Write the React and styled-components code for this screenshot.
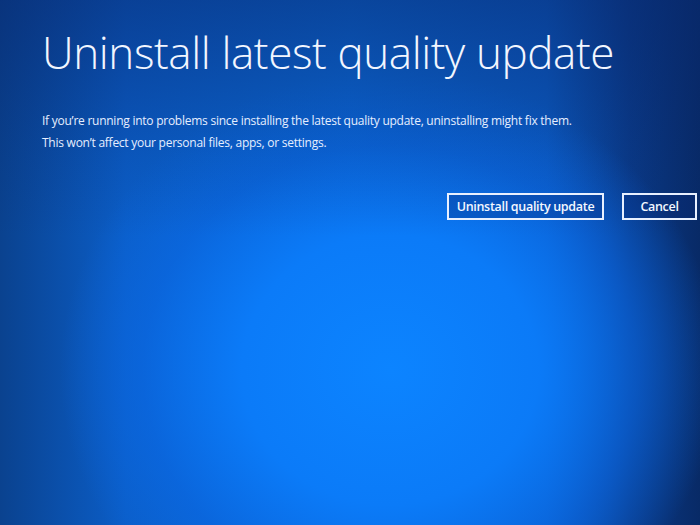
import styled, { createGlobalStyle } from "styled-components"

const GlobalStyle = createGlobalStyle`
  html, body {
    margin: 0;
    padding: 0;
    width: 700px;
    height: 525px;
    overflow: hidden;
  }
  body {
    font-family: "Open Sans", "Noto Sans", sans-serif;
  }
`

const Screen = styled.div`
  width: 700px;
  height: 525px;
  box-sizing: border-box;
  padding: 22px 0 0 42px;
  color: #fff;
  background:
    linear-gradient(to bottom, rgba(8, 40, 110, 0.55) 0%, rgba(8, 40, 110, 0.15) 30%, rgba(8, 40, 110, 0) 45%),
    radial-gradient(
      ellipse 330px 300px at 390px 370px,
      rgba(12, 132, 255, 1) 0%,
      rgba(11, 124, 250, 0.95) 45%,
      rgba(10, 105, 230, 0.6) 75%,
      rgba(10, 90, 210, 0) 100%
    ),
    linear-gradient(to right, #0a428f 0%, #0b5ec8 18%, #0b6ad8 50%, #0b5cc4 78%, #0a3a88 90%, #082a66 100%);
`

const Title = styled.h1`
  margin: 0;
  font-size: 44px;
  font-weight: 300;
  line-height: 60px;
  letter-spacing: -0.4px;
  color: #f2f6ff;
`

const Message = styled.p`
  margin: ${(p) => (p.first ? "31px" : "6px")} 0 0;
  font-size: 12px;
  line-height: 16px;
  letter-spacing: -0.25px;
  color: #e6eeff;
`

const Actions = styled.div`
  display: flex;
  justify-content: flex-end;
  gap: 18px;
  margin-top: 42px;
  padding-right: 3px;
`

const Button = styled.button`
  box-sizing: border-box;
  height: 27px;
  width: ${(p) => (p.wide ? "157px" : "75px")};
  padding: 0;
  background: rgba(8, 40, 120, 0.3);
  border: 2px solid #e8f0ff;
  color: #f4f8ff;
  font-family: "Open Sans", "Noto Sans", sans-serif;
  font-size: 12.5px;
  font-weight: 600;
  letter-spacing: -0.3px;
`

export default function App() {
  return (
    <>
      <GlobalStyle />
      <Screen>
        <Title>Uninstall latest quality update</Title>
        <Message first>
          If you’re running into problems since installing the latest quality update, uninstalling might fix them.
        </Message>
        <Message>This won’t affect your personal files, apps, or settings.</Message>
        <Actions>
          <Button wide>Uninstall quality update</Button>
          <Button>Cancel</Button>
        </Actions>
      </Screen>
    </>
  )
}
